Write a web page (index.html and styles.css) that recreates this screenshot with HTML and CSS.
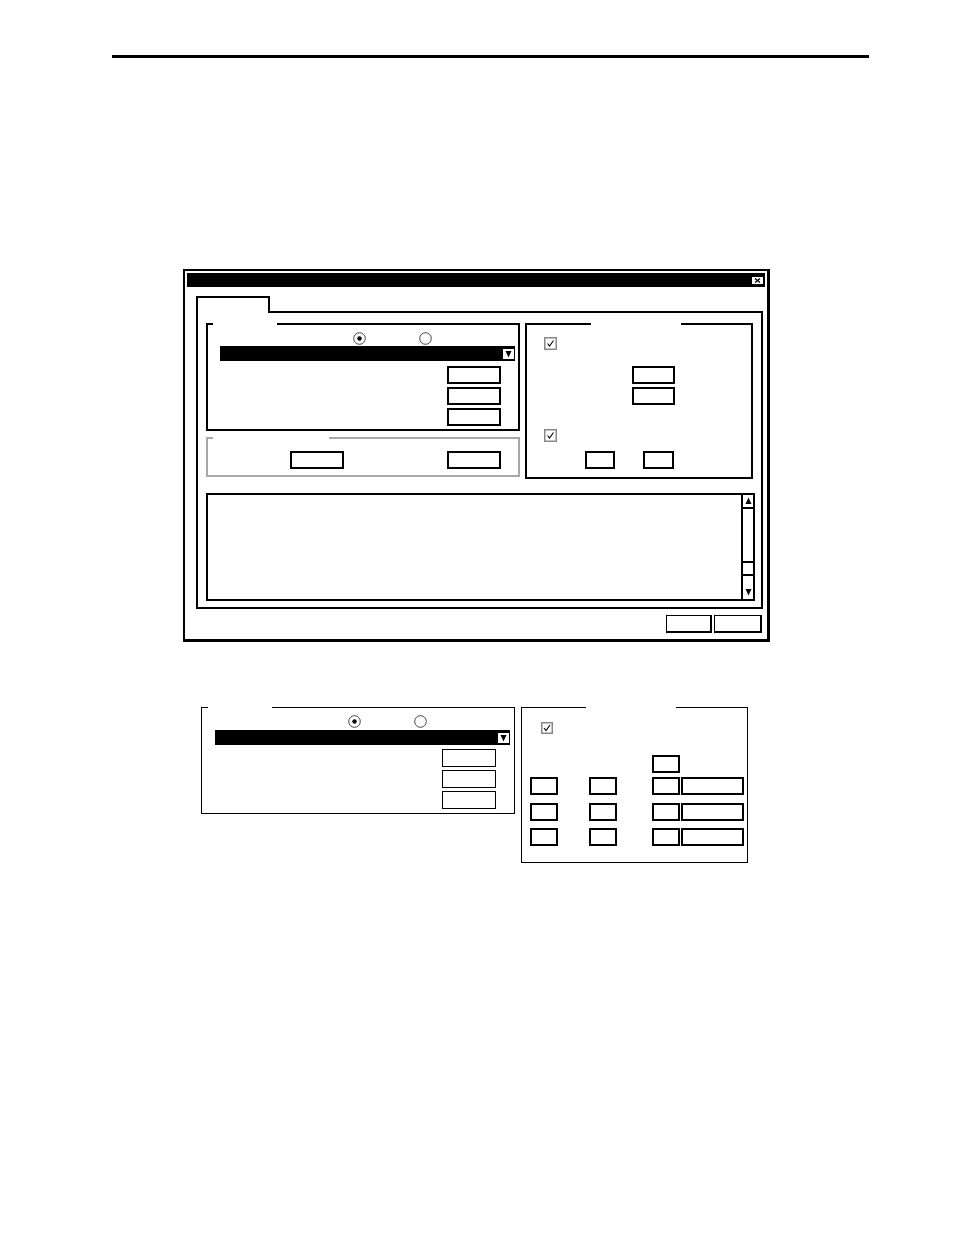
FILE: index.html
```html
<!DOCTYPE html>
<html>
<head>
<meta charset="utf-8">
<link rel="stylesheet" href="styles.css">
</head>
<body>
<div class="rule"></div>

<div class="dialog">
  <div class="titlebar">
    <svg class="close" width="11" height="7" viewBox="0 0 11 7"><rect x="0" y="0" width="11" height="7" fill="#fff"/><path d="M3 1.5 L8 5.5 M8 1.5 L3 5.5" stroke="#000" stroke-width="1.3"/></svg>
  </div>
  <div class="tabstrip"><div class="tab"></div></div>
  <div class="panel">
    <div class="topgrid">
      <div class="leftcol">
        <div class="group g1">
          <div class="gtop"><div class="seg s5"></div><div class="gap w64"></div><div class="seg rest"></div></div>
          <div class="radios">
            <svg width="13" height="13" viewBox="0 0 13 13"><circle cx="6.5" cy="6.5" r="5.8" fill="#fff" stroke="#444" stroke-width="1"/><circle cx="6.5" cy="6.5" r="2.2" fill="#000"/></svg>
            <svg width="13" height="13" viewBox="0 0 13 13"><circle cx="6.5" cy="6.5" r="5.8" fill="#fff" stroke="#444" stroke-width="1"/></svg>
          </div>
          <div class="combo">
            <div class="combo-arrow"><svg width="7" height="8" viewBox="0 0 7 8"><path d="M0.5 1 L6.5 1 L3.5 7.5 Z" fill="#000"/></svg></div>
          </div>
          <div class="btns">
            <div class="btn"></div>
            <div class="btn"></div>
            <div class="btn"></div>
          </div>
        </div>
        <div class="group g2 grey">
          <div class="gtop"><div class="seg s5"></div><div class="gap w116"></div><div class="seg rest"></div></div>
          <div class="row2">
            <div class="btn"></div>
            <div class="btn"></div>
          </div>
        </div>
      </div>
      <div class="group g3">
        <div class="gtop"><div class="seg s64"></div><div class="gap w90"></div><div class="seg rest"></div></div>
        <div class="check c1"><svg width="13" height="13" viewBox="0 0 13 13"><rect x="0.75" y="0.75" width="11.5" height="11.5" fill="#fff" stroke="#888" stroke-width="1.5"/><path d="M3.5 6.5 L5.5 9 L9.5 3.5" fill="none" stroke="#000" stroke-width="1.1"/></svg></div>
        <div class="pair">
          <div class="box b43"></div>
          <div class="box b43"></div>
        </div>
        <div class="check c2"><svg width="13" height="13" viewBox="0 0 13 13"><rect x="0.75" y="0.75" width="11.5" height="11.5" fill="#fff" stroke="#888" stroke-width="1.5"/><path d="M3.5 6.5 L5.5 9 L9.5 3.5" fill="none" stroke="#000" stroke-width="1.1"/></svg></div>
        <div class="duo">
          <div class="box b30"></div>
          <div class="box b31"></div>
        </div>
      </div>
    </div>
    <div class="textarea">
      <div class="scrollbar">
        <div class="sb-up"><svg width="7" height="8" viewBox="0 0 7 8"><path d="M0.5 7 L6.5 7 L3.5 0.5 Z" fill="#000"/></svg></div>
        <div class="sb-track"></div>
        <div class="sb-thumb"></div>
        <div class="sb-down"><svg width="7" height="8" viewBox="0 0 7 8"><path d="M0.5 1 L6.5 1 L3.5 7.5 Z" fill="#000"/></svg></div>
      </div>
    </div>
  </div>
  <div class="footer">
    <div class="fbtn fa"></div>
    <div class="fbtn fb"></div>
  </div>
</div>

<div class="lower">
  <div class="group thin l1">
    <div class="gtop"><div class="seg s6"></div><div class="gap w64"></div><div class="seg rest"></div></div>
    <div class="radios lr">
      <svg width="13" height="13" viewBox="0 0 13 13"><circle cx="6.5" cy="6.5" r="5.8" fill="#fff" stroke="#444" stroke-width="1"/><circle cx="6.5" cy="6.5" r="2.2" fill="#000"/></svg>
      <svg width="13" height="13" viewBox="0 0 13 13"><circle cx="6.5" cy="6.5" r="5.8" fill="#fff" stroke="#444" stroke-width="1"/></svg>
    </div>
    <div class="combo lc">
      <div class="combo-arrow"><svg width="7" height="8" viewBox="0 0 7 8"><path d="M0.5 1 L6.5 1 L3.5 7.5 Z" fill="#000"/></svg></div>
    </div>
    <div class="btns lb">
      <div class="btn tb"></div>
      <div class="btn tb"></div>
      <div class="btn tb"></div>
    </div>
  </div>
  <div class="group thin l2">
    <div class="gtop"><div class="seg s64"></div><div class="gap w90"></div><div class="seg rest"></div></div>
    <div class="check c3"><svg width="12" height="12" viewBox="0 0 12 12"><rect x="0.75" y="0.75" width="10.5" height="10.5" fill="#fff" stroke="#888" stroke-width="1.5"/><path d="M3 6 L5 8.5 L9 3" fill="none" stroke="#000" stroke-width="1.1"/></svg></div>
    <div class="grow r0"><div class="box sq m130"></div></div>
    <div class="grow r1"><div class="box sq m8"></div><div class="box sq m31"></div><div class="box sq m35"></div><div class="box wide m1"></div></div>
    <div class="grow r2"><div class="box sq m8"></div><div class="box sq m31"></div><div class="box sq m35"></div><div class="box wide m1"></div></div>
    <div class="grow r3"><div class="box sq m8"></div><div class="box sq m31"></div><div class="box sq m35"></div><div class="box wide m1"></div></div>
  </div>
</div>
</body>
</html>
```

FILE: styles.css
```css
* { box-sizing: border-box; margin: 0; padding: 0; }
body {
  margin: 0;
  width: 954px;
  height: 1235px;
  background: #fff;
  font-family: "Liberation Sans", Arial, sans-serif;
  overflow: hidden;
}
svg { display: block; }

.rule { margin: 55px 0 0 112px; width: 757px; height: 3px; background: #000; }

.dialog {
  margin: 211px 0 0 183px;
  width: 587px;
  height: 373px;
  border-style: solid;
  border-color: #000;
  border-width: 2px 3px 3px 2px;
  display: flex;
  flex-direction: column;
}
.titlebar {
  margin: 2px 2px 0;
  height: 14px;
  background: #000;
  display: flex;
  justify-content: flex-end;
  align-items: center;
  padding-right: 2px;
  flex: none;
}
.tabstrip { margin: 9px 0 0 11px; display: flex; flex: none; }
.tab {
  width: 74px;
  height: 17px;
  border: 2px solid #000;
  border-bottom: 0;
  background: #fff;
  margin-bottom: -2px;
  position: relative;
  z-index: 1;
}
.panel {
  margin-left: 11px;
  width: 567px;
  height: 298px;
  border: 2px solid #000;
  padding: 10px 8px 6px;
  flex: none;
}
.topgrid { display: flex; gap: 5px; align-items: flex-start; }
.leftcol { width: 314px; display: flex; flex-direction: column; gap: 6px; }

.group {
  border-style: solid;
  border-color: #000;
  border-width: 0 2px 2px 2px;
  display: flex;
  flex-direction: column;
  flex: none;
}
.gtop { display: flex; height: 2px; flex: none; }
.seg { border-top: 2px solid #000; flex: none; }
.seg.rest { flex: 1; }
.gap { flex: none; }
.s5 { width: 5px; }
.s6 { width: 6px; }
.s64 { width: 64px; }
.w64 { width: 64px; }
.w90 { width: 90px; }
.w116 { width: 116px; }

.grey { border-color: #a8a8a8; }
.grey .seg { border-top-color: #a8a8a8; }

.g1 { width: 314px; height: 108px; }
.radios { display: flex; margin: 7px 0 0 145px; gap: 53px; height: 13px; flex: none; }
.combo {
  margin: 1px 3px 0 12px;
  height: 15px;
  background: #000;
  display: flex;
  justify-content: flex-end;
  align-items: center;
  padding-right: 1px;
  flex: none;
}
.combo-arrow {
  width: 11px;
  height: 10px;
  background: #fff;
  display: flex;
  align-items: center;
  justify-content: center;
}
.btns { align-self: flex-end; margin: 5px 17px 0 0; display: flex; flex-direction: column; gap: 3px; }
.btn { width: 54px; height: 18px; border: 2px solid #000; }

.g2 { width: 314px; height: 40px; }
.row2 { display: flex; margin: 12px 0 0 82px; gap: 103px; }

.g3 { width: 228px; height: 156px; }
.check { flex: none; }
.c1 { margin: 12px 0 0 17px; }
.pair { display: flex; flex-direction: column; gap: 3px; margin: 16px 0 0 105px; }
.c2 { margin: 24px 0 0 17px; }
.duo { display: flex; gap: 28px; margin: 9px 0 0 58px; }
.box { height: 18px; border: 2px solid #000; flex: none; }
.b43 { width: 43px; }
.b30 { width: 30px; }
.b31 { width: 31px; }

.textarea {
  margin-top: 14px;
  width: 549px;
  height: 108px;
  border: 2px solid #000;
  display: flex;
  justify-content: flex-end;
}
.scrollbar { width: 12px; border-left: 2px solid #000; display: flex; flex-direction: column; }
.sb-up { height: 14px; border-bottom: 2px solid #000; display: flex; align-items: center; justify-content: center; flex: none; }
.sb-track { flex: 1; }
.sb-thumb { height: 15px; border-top: 2px solid #000; border-bottom: 2px solid #000; flex: none; }
.sb-down { height: 23px; display: flex; align-items: flex-end; justify-content: center; padding-bottom: 3px; flex: none; }

.footer { display: flex; justify-content: flex-end; gap: 2px; margin: 6px 5px 0 0; flex: none; }
.fbtn { height: 18px; border-style: solid; border-color: #000; border-width: 1px 2px 2px 1px; }
.fa { width: 46px; }
.fb { width: 48px; }

.lower { display: flex; margin: 65px 0 0 201px; gap: 6px; align-items: flex-start; }
.thin { border-width: 0 1px 1px 1px; }
.thin .gtop { height: 1px; }
.thin .seg { border-top-width: 1px; }

.l1 { width: 314px; height: 107px; }
.radios.lr { margin: 7px 0 0 146px; }
.combo.lc { margin: 2px 4px 0 13px; }
.btns.lb { margin: 4px 18px 0 0; }
.btn.tb { border-width: 1px; }

.l2 { width: 227px; height: 156px; }
.c3 { margin: 14px 0 0 19px; }
.grow { display: flex; flex: none; }
.r0 { margin-top: 21px; }
.r1 { margin-top: 4px; }
.r2 { margin-top: 8px; }
.r3 { margin-top: 7px; }
.sq { width: 28px; }
.wide { width: 63px; }
.m130 { margin-left: 130px; }
.m8 { margin-left: 8px; }
.m31 { margin-left: 31px; }
.m35 { margin-left: 35px; }
.m1 { margin-left: 1px; }
```
